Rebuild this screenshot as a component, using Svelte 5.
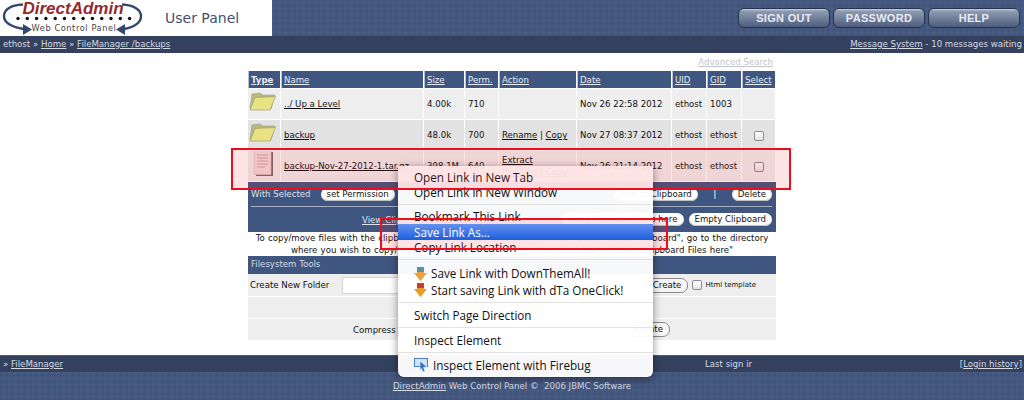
<script>
  const columns = [
    { label: 'Type', width: 33, bold: true },
    { label: 'Name', width: 143 },
    { label: 'Size', width: 41 },
    { label: 'Perm.', width: 34 },
    { label: 'Action', width: 78 },
    { label: 'Date', width: 95 },
    { label: 'UID', width: 35 },
    { label: 'GID', width: 35 },
    { label: 'Select', width: 34 }
  ];

  const files = [
    { icon: 'folder', name: '../ Up a Level', size: '4.00k', perm: '710', date: 'Nov 26 22:58 2012', uid: 'ethost', gid: '1003' },
    { icon: 'folder', name: 'backup', size: '48.0k', perm: '700', rename: true, date: 'Nov 27 08:37 2012', uid: 'ethost', gid: 'ethost', check: true },
    { icon: 'file', name: 'backup-Nov-27-2012-1.tar.gz', size: '398.1M', perm: '640', extract: true, date: 'Nov 26 21:14 2012', uid: 'ethost', gid: 'ethost', check: true }
  ];

  const dots = Array.from({ length: 13 }, (_, i) => 18 + i * 9.3);
</script>

<div class="page">
  <header class="top">
    <div class="brand">
      <svg class="logo" width="146" height="36" viewBox="0 0 146 36">
        <path d="M23 4.500 C10 5 4 10 4 16 C4 23 12 27 24 29" fill="none" stroke="#33486f" stroke-width="2.400" />
        <path d="M23 24 L32 29.500 L23 35 Z" fill="#33486f" />
        <path d="M122 4.500 C134 5 141 10 141 16 C141 23 134 27 124 29" fill="none" stroke="#33486f" stroke-width="2.400" />
        <path d="M125 24 L116 29.500 L125 35 Z" fill="#33486f" />
        {#each dots as x}
          <circle cx={x} cy="18.500" r="1.700" fill="#111" />
        {/each}
        <text x="73" y="13.500" text-anchor="middle" class="logo-name">DirectAdmin</text>
        <text x="74" y="31" text-anchor="middle" class="logo-sub">Web Control Panel</text>
      </svg>
      <span class="panel">User Panel</span>
    </div>
    <nav class="tabs">
      <span class="tab">SIGN OUT</span>
      <span class="tab">PASSWORD</span>
      <span class="tab">HELP</span>
    </nav>
  </header>

  <div class="crumbs">
    <span>ethost » <a href="#h">Home</a> » <a href="#f">FileManager /backups</a></span>
    <span><a href="#m">Message System</a> - 10 messages waiting</span>
  </div>

  <main class="content">
    <div class="search"><a href="#s">Advanced Search</a></div>
    <table class="files">
      <colgroup>
        {#each columns as c}
          <col style="width: {c.width}px" />
        {/each}
      </colgroup>
      <thead>
        <tr>
          {#each columns as c}
            <th class:bold={c.bold}><a href="#c">{c.label}</a></th>
          {/each}
        </tr>
      </thead>
      <tbody>
        {#each files as f, i}
          <tr class:alt={i % 2 === 1}>
            <td class="icon">
              {#if f.icon === 'folder'}
                <svg width="27" height="20" viewBox="0 0 27 20">
                  <path d="M3 2 L11 1 L14 3 L26 3 L22 17 L1 17 Z" fill="#bdb97c" stroke="#999" stroke-width=".6" />
                  <path d="M6 5.500 L26.500 4.500 L21 18 L1 18 Z" fill="#e8e382" stroke="#98955e" stroke-width=".6" />
                </svg>
              {:else}
                <svg width="25" height="27" viewBox="0 0 25 27">
                  <rect x="7" y="2" width="17" height="24" fill="#7b6a68" />
                  <rect x="5" y="0.500" width="17" height="24" fill="#f4dadb" stroke="#d9c0c2" stroke-width=".6" />
                  <path d="M8 5 H19 M8 8 H19 M8 11 H19 M8 14 H19 M8 17 H16" stroke="#c2a8ab" stroke-width="1.200" />
                </svg>
              {/if}
            </td>
            <td><a href="#n">{f.name}</a></td>
            <td>{f.size}</td>
            <td>{f.perm}</td>
            <td class="action">
              {#if f.rename}<a href="#r">Rename</a> | <a href="#c">Copy</a>{/if}
              {#if f.extract}<a href="#e">Extract</a><br /><a href="#r">Rename</a> | <a href="#c">Copy</a>{/if}
            </td>
            <td>{f.date}</td>
            <td>{f.uid}</td>
            <td>{f.gid}</td>
            <td class="center">{#if f.check}<span class="check"></span>{/if}</td>
          </tr>
        {/each}
      </tbody>
    </table>

    <section class="actions">
      <div class="action-row first">
        <span class="label">With Selected</span>
        <span class="pill perm">set Permission</span>
        <span class="spacer"></span>
        <span class="pill">Add to Clipboard</span>
        <span class="bar">|</span>
        <span class="pill delete">Delete</span>
      </div>
      <div class="action-row second">
        <a href="#v">View Clipboard</a>
        <span class="spacer"></span>
        <span class="pill">Copy Clipboard Files here</span>
        <span class="pill">Empty Clipboard</span>
      </div>
    </section>

    <p class="note">
      To copy/move files with the clipboard, select the files that you want then click "Add to Clipboard", go to the directory<br />
      where you wish to copy/move the selected files to, and then just click on "Copy Clipboard Files here"
    </p>

    <div class="tools-head">Filesystem Tools</div>
    <div class="tool create">
      <span class="tool-label">Create New Folder</span>
      <span class="field"></span>
      <span class="spacer"></span>
      <span class="pill grey">Create</span>
      <span class="check small"></span>
      <span class="tiny">Html template</span>
    </div>
    <div class="tool empty"></div>
    <div class="tool compress">
      <span class="compress-label">Compress</span>
      <span class="spacer"></span>
      <span class="pill grey">Create</span>
    </div>
  </main>

  <div class="crumbs foot">
    <span>» <a href="#f">FileManager</a></span>
    <span class="signin">Last sign ir</span>
    <span>[<a href="#l">Login history</a>]</span>
  </div>

  <footer class="bottom">
    <span><a href="#d">DirectAdmin</a> Web Control Panel ©&nbsp; 2006 JBMC Software</span>
  </footer>

  <div class="menu">
    <div class="item">Open Link in New Tab</div>
    <div class="item tight">Open Link in New Window</div>
    <hr class="sep-a" />
    <div class="item">Bookmark This Link</div>
    <div class="item active">Save Link As...</div>
    <div class="item tight">Copy Link Location</div>
    <hr class="sep-b" />
    <div class="item with-icon">
      <svg width="13" height="15" viewBox="0 0 13 15"><path d="M3 1 H10 V7 H13 L6.500 15 L0 7 H3 Z" fill="#e9a23d" /><path d="M3 1 H10 V6 H3 Z" fill="#5f8ea0" /></svg>
      Save Link with DownThemAll!
    </div>
    <div class="item with-icon tall">
      <svg width="13" height="15" viewBox="0 0 13 15"><path d="M3 1 H10 V7 H13 L6.500 15 L0 7 H3 Z" fill="#ef9b1f" /><path d="M3 1 H10 V6 H3 Z" fill="#c8402a" /></svg>
      Start saving Link with dTa OneClick!
    </div>
    <hr />
    <div class="item">Switch Page Direction</div>
    <hr />
    <div class="item">Inspect Element</div>
    <hr />
    <div class="item with-icon">
      <svg width="15" height="14" viewBox="0 0 15 14"><rect x=".5" y=".5" width="13" height="8" fill="#cfe2f5" stroke="#4d7fbf" /><path d="M6 3 L13 9 L9.500 9.500 L11 13 L9 14 L7.500 10.500 L6 12 Z" fill="#2f74c9" stroke="#fff" stroke-width=".5" /></svg>
      Inspect Element with Firebug
    </div>
  </div>

  <div class="mark row-mark"></div>
  <div class="mark item-mark"></div>
</div>

<style>
  :global(body) {
    margin: 0;
    background: #fff;
  }

  .page {
    position: relative;
    width: 1024px;
    height: 400px;
    overflow: hidden;
    font-family: "DejaVu Sans", Verdana, sans-serif;
    font-size: 8.600px;
    color: #111;
    display: flex;
    flex-direction: column;
  }

  a {
    color: inherit;
  }

  .top,
  .bottom {
    background-color: #44587f;
    background-image:
      repeating-linear-gradient(90deg, rgba(30, 45, 80, 0.08) 0 1px, transparent 1px 3px, rgba(255, 255, 255, 0.025) 3px 4px, transparent 4px 6px),
      repeating-linear-gradient(0deg, rgba(30, 45, 80, 0.08) 0 1px, transparent 1px 3px, rgba(255, 255, 255, 0.025) 3px 4px, transparent 4px 6px);
  }

  .top {
    height: 36px;
    display: flex;
    justify-content: space-between;
    flex-shrink: 0;
  }

  .brand {
    width: 272px;
    background: #fff;
    display: flex;
    align-items: center;
  }

  .logo {
    flex-shrink: 0;
  }

  .logo-name {
    font-family: "Liberation Sans", Arial, sans-serif;
    font-size: 17px;
    font-style: italic;
    font-weight: 700;
    fill: #94292f;
  }

  .logo-sub {
    font-family: "DejaVu Sans", sans-serif;
    font-size: 8.200px;
    letter-spacing: 0.600px;
    fill: #444;
  }

  .panel {
    margin-left: 19px;
    font-family: "DejaVu Sans", sans-serif;
    font-size: 14px;
    color: #3f4f73;
  }

  .tabs {
    display: flex;
    gap: 3px;
    padding: 8px 4px 0 0;
  }

  .tab {
    width: 90px;
    height: 18px;
    border: 1px solid #26344f;
    border-radius: 6px;
    background: linear-gradient(#cdd3de 0, #8e9ab1 12%, #6f7d99 55%, #4d5c7c 100%);
    color: #e8ebf2;
    font-family: "Liberation Sans", Arial, sans-serif;
    font-weight: 700;
    font-size: 11px;
    letter-spacing: 0.300px;
    line-height: 18px;
    text-align: center;
  }

  .crumbs {
    height: 17px;
    line-height: 17px;
    background: #33415f;
    color: #d6dae3;
    padding: 0 2px 0 3px;
    display: flex;
    justify-content: space-between;
    flex-shrink: 0;
  }

  .content {
    height: 302px;
    flex-shrink: 0;
    padding-left: 248px;
    width: 528px;
  }

  .search {
    height: 18px;
    line-height: 19px;
    text-align: right;
    margin-right: 3px;
    color: #c2c4cb;
  }

  .files {
    width: 528px;
    table-layout: fixed;
    border-collapse: separate;
    border-spacing: 0;
    font-size: 8.600px;
  }

  .files th {
    height: 17px;
    padding: 0 2px;
    background: #3f5680;
    border-right: 1px solid #fff;
    border-left: 1px solid #b9c0ce;
    border-bottom: 1px solid #fff;
    color: #e9ecf2;
    font-weight: 400;
    text-align: left;
    box-sizing: content-box;
  }

  .files th.bold {
    font-weight: 700;
  }

  .files td {
    height: 31px;
    padding: 0 2px 0 3px;
    background: #eee;
    border-right: 1px solid #fff;
    border-bottom: 1px solid #fff;
    white-space: nowrap;
    overflow: hidden;
    line-height: 12px;
    box-sizing: border-box;
  }

  .files tr.alt td {
    background: #e2e2e2;
  }

  .files td.icon {
    padding: 0 0 0 1px;
  }

  .icon svg {
    display: block;
    margin-top: -5px;
  }

  .center {
    text-align: center;
  }

  .check {
    display: inline-block;
    width: 8px;
    height: 8px;
    border: 1px solid #8b8b8b;
    border-radius: 2px;
    background: linear-gradient(#fff, #e4e4e4);
    vertical-align: middle;
  }

  .actions {
    height: 50px;
    background: #3f5680;
    color: #dde1ea;
  }

  .action-row {
    display: flex;
    align-items: center;
    height: 25px;
    box-sizing: border-box;
  }

  .action-row.first {
    margin: 0 4px 0 3px;
    border-bottom: 1px solid #a6afc2;
  }

  .perm {
    margin-left: 10px;
  }

  .action-row.second {
    padding: 0 4px 0 114px;
    gap: 5px;
  }

  .spacer {
    flex: 1;
  }

  .bar {
    width: 34px;
    text-align: center;
    font-weight: 700;
  }

  .pill {
    background: #fff;
    color: #111;
    border-radius: 7px;
    padding: 0 6px;
    height: 13px;
    line-height: 13px;
    white-space: nowrap;
    box-shadow: inset 0 -1px 1px #bbb;
  }

  .pill.grey {
    border: 1px solid #8a8a8a;
    box-shadow: none;
    background: #f6f6f6;
  }

  .note {
    margin: 0 -10px;
    height: 24px;
    line-height: 11.500px;
    text-align: center;
    padding-top: 1px;
    box-sizing: border-box;
    white-space: nowrap;
    word-spacing: 0.500px;
  }

  .tools-head {
    height: 18px;
    line-height: 17px;
    padding-left: 3px;
    background: #3f5680;
    color: #d6dae3;
    box-sizing: border-box;
  }

  .tool {
    background: #eee;
    display: flex;
    align-items: center;
    border-bottom: 1px solid #fff;
    box-sizing: border-box;
  }

  .create {
    height: 23px;
    padding: 0 20px 0 2px;
  }

  .tool-label {
    width: 92px;
  }

  .field {
    width: 120px;
    height: 15px;
    background: #fff;
    border: 1px solid #d4d4d4;
  }

  .check.small {
    margin-left: 4px;
  }

  .tiny {
    font-size: 7px;
    margin-left: 3px;
  }

  .empty {
    height: 22px;
  }

  .compress {
    height: 22px;
    padding: 0 106px 0 105px;
  }

  .foot {
    position: relative;
    border-top: 1px solid #4a5a7d;
    height: 16px;
    line-height: 16px;
  }

  .signin {
    position: absolute;
    left: 705px;
  }

  .bottom {
    flex: 1;
    color: #d6dae3;
    text-align: center;
    padding-top: 9px;
  }

  .menu {
    position: absolute;
    left: 398px;
    top: 166px;
    width: 255px;
    height: 211px;
    box-sizing: border-box;
    padding-top: 3px;
    background: rgba(255, 255, 255, 0.96);
    border-radius: 0 0 6px 6px;
    box-shadow: 0 2px 8px rgba(0, 0, 0, 0.45);
    font-family: "Open Sans", "DejaVu Sans", sans-serif;
    font-size: 11.700px;
    color: #111;
  }

  .item {
    height: 16px;
    line-height: 16px;
    padding-left: 16px;
    white-space: nowrap;
  }

  .item.tight {
    margin-top: -1px;
  }

  .item.tall {
    height: 17px;
  }

  .item.active {
    position: relative;
    z-index: 1;
    color: #fff;
    background: linear-gradient(#6590ee, #1c5fe0);
  }

  .with-icon {
    display: flex;
    align-items: center;
    gap: 4px;
    padding-left: 16px;
  }

  .menu hr {
    border: 0;
    border-top: 1px solid #e2e2e2;
    margin: 4px 0;
  }

  .menu hr.sep-a {
    margin-bottom: 3px;
  }

  .menu hr.sep-b {
    margin-bottom: 5px;
  }

  .mark {
    position: absolute;
    box-sizing: border-box;
    border: 2px solid #ec0d1d;
    background: rgba(250, 30, 40, 0.12);
  }

  .row-mark {
    left: 231px;
    top: 148px;
    width: 560px;
    height: 42px;
  }

  .item-mark {
    left: 380px;
    top: 218px;
    width: 288px;
    height: 32px;
  }
</style>
